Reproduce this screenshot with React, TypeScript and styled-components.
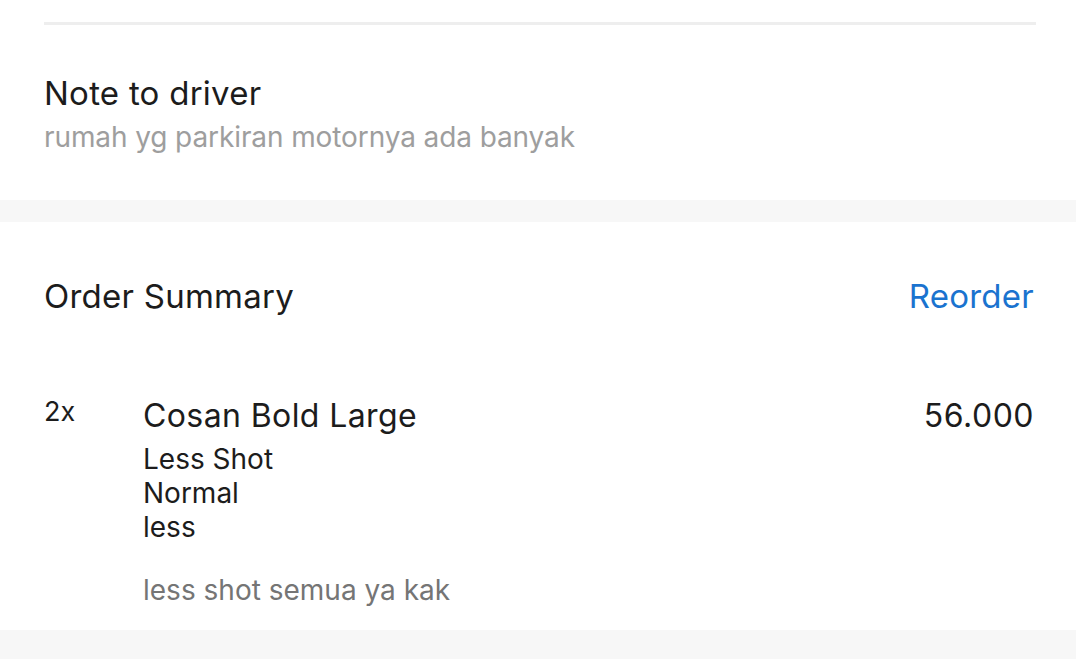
import React from "react";
import styled, { createGlobalStyle } from "styled-components";

const GlobalStyle = createGlobalStyle`
  body {
    margin: 0;
    background: #ffffff;
    font-family: Inter, "Noto Sans", sans-serif;
    color: #1c1c1c;
  }
`;

const App = () => {
  return (
    <Page>
      <GlobalStyle />
      <Section>
        <Divider />
        <NoteBlock>
          <Title>Note to driver</Title>
          <Subtitle>rumah yg parkiran motornya ada banyak</Subtitle>
        </NoteBlock>
      </Section>
      <Band />
      <Section>
        <Header>
          <Title>Order Summary</Title>
          <Link>Reorder</Link>
        </Header>
        <ItemRow>
          <Qty>2x</Qty>
          <ItemBody>
            <ItemName>Cosan Bold Large</ItemName>
            <Options>
              <Option>Less Shot</Option>
              <Option>Normal</Option>
              <Option>less</Option>
            </Options>
            <ItemNote>less shot semua ya kak</ItemNote>
          </ItemBody>
          <Price>56.000</Price>
        </ItemRow>
      </Section>
      <Band $tall />
    </Page>
  );
};

export default App;

const Page = styled.div`
  width: 100%;
  min-height: 659px;
  display: flex;
  flex-direction: column;
`;

const Section = styled.div`
  padding: 0 40px 0 44px;
`;

const Divider = styled.div`
  margin-top: 22px;
  height: 3px;
  background-color: #eeeeee;
`;

const NoteBlock = styled.div`
  padding-top: 49px;
  padding-bottom: 47px;
  display: flex;
  flex-direction: column;
  gap: 9px;
`;

const Title = styled.div`
  font-size: 33px;
  line-height: 38px;
  letter-spacing: 0.25px;
  color: #1c1c1c;
`;

const Subtitle = styled.div`
  font-size: 28px;
  line-height: 32px;
  letter-spacing: -0.1px;
  color: #9e9e9e;
`;

const Band = styled.div<{ $tall?: boolean }>`
  height: ${(p) => (p.$tall ? "40px" : "22px")};
  background-color: #f7f7f7;
  flex-shrink: 0;
`;

const Header = styled.div`
  display: flex;
  justify-content: space-between;
  align-items: center;
  padding-top: 55px;
  padding-right: 2px;
`;

const Link = styled.div`
  font-size: 33px;
  line-height: 38px;
  letter-spacing: 0.25px;
  color: #1a73cf;
  cursor: pointer;
`;

const ItemRow = styled.div`
  display: flex;
  align-items: flex-start;
  padding: 82px 2px 23px 0;
`;

const Qty = styled.div`
  width: 99px;
  font-size: 27px;
  line-height: 30px;
  flex-shrink: 0;
`;

const ItemBody = styled.div`
  flex: 1;
  display: flex;
  flex-direction: column;
`;

const ItemName = styled.div`
  font-size: 32px;
  line-height: 38px;
  letter-spacing: 0.4px;
`;

const Options = styled.div`
  margin-top: 7px;
  display: flex;
  flex-direction: column;
`;

const Option = styled.div`
  font-size: 28px;
  line-height: 34px;
`;

const ItemNote = styled.div`
  margin-top: 29px;
  font-size: 28px;
  line-height: 34px;
  color: #757575;
`;

const Price = styled.div`
  font-size: 32px;
  line-height: 38px;
  letter-spacing: 0.5px;
`;
